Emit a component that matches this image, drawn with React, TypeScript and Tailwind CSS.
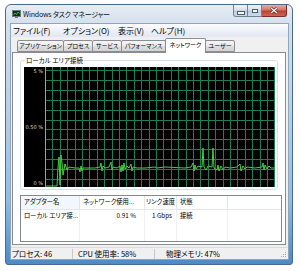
import React from 'react';

const jp = "font-['Noto_Sans_CJK_JP','Noto_Sans',sans-serif] [font-feature-settings:'palt']";

const menus = [
  { label: 'ファイル(F)', w: 'w-[50px]' },
  { label: 'オプション(O)', w: 'w-[55px]' },
  { label: '表示(V)', w: 'w-[33px]' },
  { label: 'ヘルプ(H)', w: 'w-[40px]' },
];

const tabs = [
  { label: 'アプリケーション', w: 'w-[47px]' },
  { label: 'プロセス', w: 'w-[30px]' },
  { label: 'サービス', w: 'w-[30px]' },
  { label: 'パフォーマンス', w: 'w-[45px]' },
  { label: 'ネットワーク', w: 'w-[41px]', active: true },
  { label: 'ユーザー', w: 'w-[30px]' },
];

// network usage trace, graph-relative coords (230 x 120)
const trace: [number, number][] = [
  [0, 119], [12, 119], [13, 100], [14, 90], [15, 118], [16, 88], [17, 96], [18, 108], [20, 97],
  [22, 103], [24, 100], [30, 101], [34, 101], [35, 105], [36, 99], [37, 104], [38, 101], [50, 101],
  [55, 100], [56, 96], [57, 104], [58, 99], [60, 101], [64, 100], [66, 95], [67, 103], [68, 100],
  [72, 101], [75, 99], [76, 105], [77, 98], [78, 104], [79, 96], [80, 102], [82, 99], [84, 101],
  [86, 97], [87, 104], [88, 100], [92, 101], [100, 101], [110, 100], [112, 101], [120, 100],
  [140, 101], [146, 100], [148, 96], [149, 104], [150, 98], [151, 102], [153, 99], [157, 100],
  [158, 81], [159, 100], [161, 103], [163, 99], [167, 100], [168, 81], [169, 101], [172, 103],
  [173, 98], [174, 104], [176, 99], [178, 103], [180, 100], [185, 101], [192, 100], [195, 97],
  [196, 104], [198, 99], [200, 102], [202, 100], [210, 101], [217, 100], [218, 96], [219, 103],
  [220, 98], [222, 102], [224, 99], [226, 101], [230, 101],
];

function TaskIcon() {
  return (
    <svg width="9" height="8" viewBox="0 0 9 8" className="shrink-0">
      <rect x="0.5" y="0.5" width="8" height="6" fill="#1b2b1b" stroke="#6d7a86" />
      <polyline points="1.5,5 3,3 4.5,4.5 6,2 7.5,3.5" fill="none" stroke="#3be03b" strokeWidth="0.8" />
      <rect x="3" y="7" width="3" height="1" fill="#6d7a86" />
    </svg>
  );
}

function NetGraph() {
  const vlines = Array.from({ length: 32 }, (_, i) => Math.round(i * 7.4) + 0.5);
  const hlines = Array.from({ length: 12 }, (_, i) => Math.round(3 + i * 9.9) + 0.5);
  return (
    <svg width="230" height="120" className="block">
      {vlines.map((x) => (
        <line key={`v${x}`} x1={x} y1="0" x2={x} y2="120" stroke="#1f7c55" strokeWidth="1" />
      ))}
      {hlines.map((y) => (
        <line key={`h${y}`} x1="0" y1={y} x2="230" y2={y} stroke="#1f7c55" strokeWidth="1" />
      ))}
      <line x1="0.5" y1="0" x2="0.5" y2="120" stroke="#a9a94c" strokeWidth="1" />
      <polyline
        points={trace.map(([x, y]) => `${x},${y}`).join(' ')}
        fill="none"
        stroke="#3ed23e"
        strokeWidth="1"
      />
    </svg>
  );
}

export default function App() {
  return (
    <div className={`w-[300px] h-[271px] bg-white pl-[5px] pt-[4px] text-black ${jp}`}>
      <div className="w-[288px] h-[261px] flex flex-col rounded-t-[6px] rounded-b-[3px] border border-[#4a6a8e] bg-[linear-gradient(180deg,#e6edf4_0%,#d3dfec_8%,#b9d0e7_40%,#93bde4_75%,#4a8bc9_100%)]">
        {/* title bar */}
        <div className="h-[18px] flex items-start">
          <div className="h-[18px] flex items-center pl-[6px] gap-[2px]">
            <TaskIcon />
            <span className="text-[7px] leading-none tracking-[-0.2px] text-[#111]">Windows タスク マネージャー</span>
          </div>
          <div className="ml-auto mr-[5px] flex h-[12px]">
            <div className="w-[15px] flex items-center justify-center rounded-bl-[3px] border border-t-0 border-[#6f8399] bg-[linear-gradient(180deg,#eef3f8_0%,#d6e1ec_45%,#bccde0_55%,#cbdbeb_100%)]">
              <div className="w-[6px] h-[2px] mt-[4px] bg-white border border-[#4d5d70] box-content" />
            </div>
            <div className="w-[14px] flex items-center justify-center border border-l-0 border-t-0 border-[#6f8399] bg-[linear-gradient(180deg,#eef3f8_0%,#d6e1ec_45%,#bccde0_55%,#cbdbeb_100%)]">
              <div className="w-[6px] h-[4px] border border-[#4d5d70] bg-[#f4f7fa]" />
            </div>
            <div className="w-[25px] flex items-center justify-center rounded-br-[3px] border border-l-0 border-t-0 border-[#7a3028] bg-[linear-gradient(180deg,#e7aca1_0%,#d77466_45%,#c0402f_55%,#cd6552_100%)]">
              <svg width="8" height="7" viewBox="0 0 8 7">
                <path d="M1 1 L7 6 M7 1 L1 6" stroke="#5a1a12" strokeWidth="2.6" />
                <path d="M1 1 L7 6 M7 1 L1 6" stroke="#ffffff" strokeWidth="1.4" />
              </svg>
            </div>
          </div>
        </div>

        {/* client area */}
        <div className="ml-[4px] mr-[3px] flex-1 flex flex-col border border-[#8ea6c0] bg-[#f0f0f0]">
          {/* menu bar */}
          <div className="h-[13px] flex items-center pl-[2px] text-[8px] leading-none bg-[linear-gradient(180deg,#fbfcfe_0%,#eef1f8_50%,#e1e7f3_100%)]">
            {menus.map((m) => (
              <span key={m.label} className={`${m.w} whitespace-nowrap`}>{m.label}</span>
            ))}
          </div>

          {/* tab control */}
          <div className="flex-1 flex flex-col pt-[1px] pl-[1px] pr-[2px] pb-[2px]">
            <div className="h-[14px] flex items-end pl-[5px] relative z-10">
              {tabs.map((t, i) => (
                <div
                  key={t.label}
                  className={`${t.w} ${i > 0 ? '-ml-px' : ''} flex items-center justify-center whitespace-nowrap overflow-hidden text-[6px] leading-none border border-[#898c95] rounded-t-[2px] ${
                    t.active
                      ? 'h-[15px] -mb-px bg-white border-b-0 relative z-10 pb-[2px]'
                      : 'h-[12px] bg-[linear-gradient(180deg,#f5f5f5_0%,#ebebeb_50%,#dedede_51%,#d4d4d4_100%)]'
                  }`}
                >
                  {t.label}
                </div>
              ))}
            </div>

            <div className="flex-1 flex flex-col border border-[#898c95] bg-white">
              {/* group box with graph */}
              <fieldset className="ml-[7px] mr-[7px] mt-[2px] border border-[#d5dfe5] rounded-[3px] pl-[3px] pr-[2px] pb-[2px]">
                <legend className="ml-[1px] px-[1px] text-[6.5px] leading-[10px]">ローカル エリア接続</legend>
                <div className="mt-[2px] h-[120px] flex bg-black">
                  <div className="w-[21px] flex flex-col justify-between items-end pr-[2px] py-[1px] text-[5px] leading-[6px] text-[#dcdcdc] font-['DejaVu_Sans',sans-serif]">
                    <span>5 %</span>
                    <span>0.50 %</span>
                    <span>0 %</span>
                  </div>
                  <NetGraph />
                </div>
              </fieldset>

              {/* adapter list */}
              <div className="mt-[5px] ml-[7px] mr-[3px] h-[47px] flex flex-col border border-[#828790] bg-white text-[6.3px] leading-none">
                <div className="h-[14px] flex border-b border-[#e3e6ea]">
                  <div className="w-[59px] relative flex items-center px-[3px] border-r border-[#e3e6ea] bg-[#f1f7fc]">
                    <svg width="5" height="3" viewBox="0 0 5 3" className="absolute top-[1px] left-[19px]">
                      <path d="M0.5 2.5 L2.5 0.5 L4.5 2.5" fill="none" stroke="#8aa0b6" strokeWidth="0.8" />
                    </svg>
                    アダプター名
                  </div>
                  <div className="w-[65px] flex items-center px-[3px] border-r border-[#e3e6ea] whitespace-nowrap overflow-hidden">ネットワーク使用...</div>
                  <div className="w-[32px] flex items-center px-[1px] border-r border-[#e3e6ea] whitespace-nowrap">リンク速度</div>
                  <div className="w-[51px] flex items-center px-[3px] border-r border-[#e3e6ea]">状態</div>
                  <div className="flex-1" />
                </div>
                <div className="flex-1 flex">
                  <div className="w-[59px] border-r border-[#eef0f2] pl-[3px] pt-[3px] whitespace-nowrap">ローカル エリア接...</div>
                  <div className="w-[65px] border-r border-[#eef0f2] px-[8px] pt-[3px] text-right">0.91 %</div>
                  <div className="w-[32px] border-r border-[#eef0f2] px-[4px] pt-[3px] text-right whitespace-nowrap">1 Gbps</div>
                  <div className="w-[51px] border-r border-[#eef0f2] px-[3px] pt-[3px]">接続</div>
                  <div className="flex-1" />
                </div>
              </div>
            </div>
          </div>

          {/* status bar */}
          <div className="h-[12px] flex items-center text-[7.5px] leading-none border-t border-[#dadada]">
            <div className="w-[61px] pl-[1px] whitespace-nowrap">プロセス: 46</div>
            <div className="w-[82px] h-[10px] flex items-center pl-[5px] border-l border-[#c8c8c8] whitespace-nowrap">CPU 使用率: 58%</div>
            <div className="flex-1 h-[10px] flex items-center pl-[11px] border-l border-[#c8c8c8] whitespace-nowrap">物理メモリ: 47%</div>
            <svg width="7" height="7" viewBox="0 0 7 7" className="self-end mr-[1px] mb-[1px]">
              <rect x="5" y="1" width="1" height="1" fill="#a8a8a8" />
              <rect x="3" y="3" width="1" height="1" fill="#a8a8a8" />
              <rect x="5" y="3" width="1" height="1" fill="#a8a8a8" />
              <rect x="1" y="5" width="1" height="1" fill="#a8a8a8" />
              <rect x="3" y="5" width="1" height="1" fill="#a8a8a8" />
              <rect x="5" y="5" width="1" height="1" fill="#a8a8a8" />
            </svg>
          </div>
        </div>
        <div className="h-[4px]" />
      </div>
    </div>
  );
}
